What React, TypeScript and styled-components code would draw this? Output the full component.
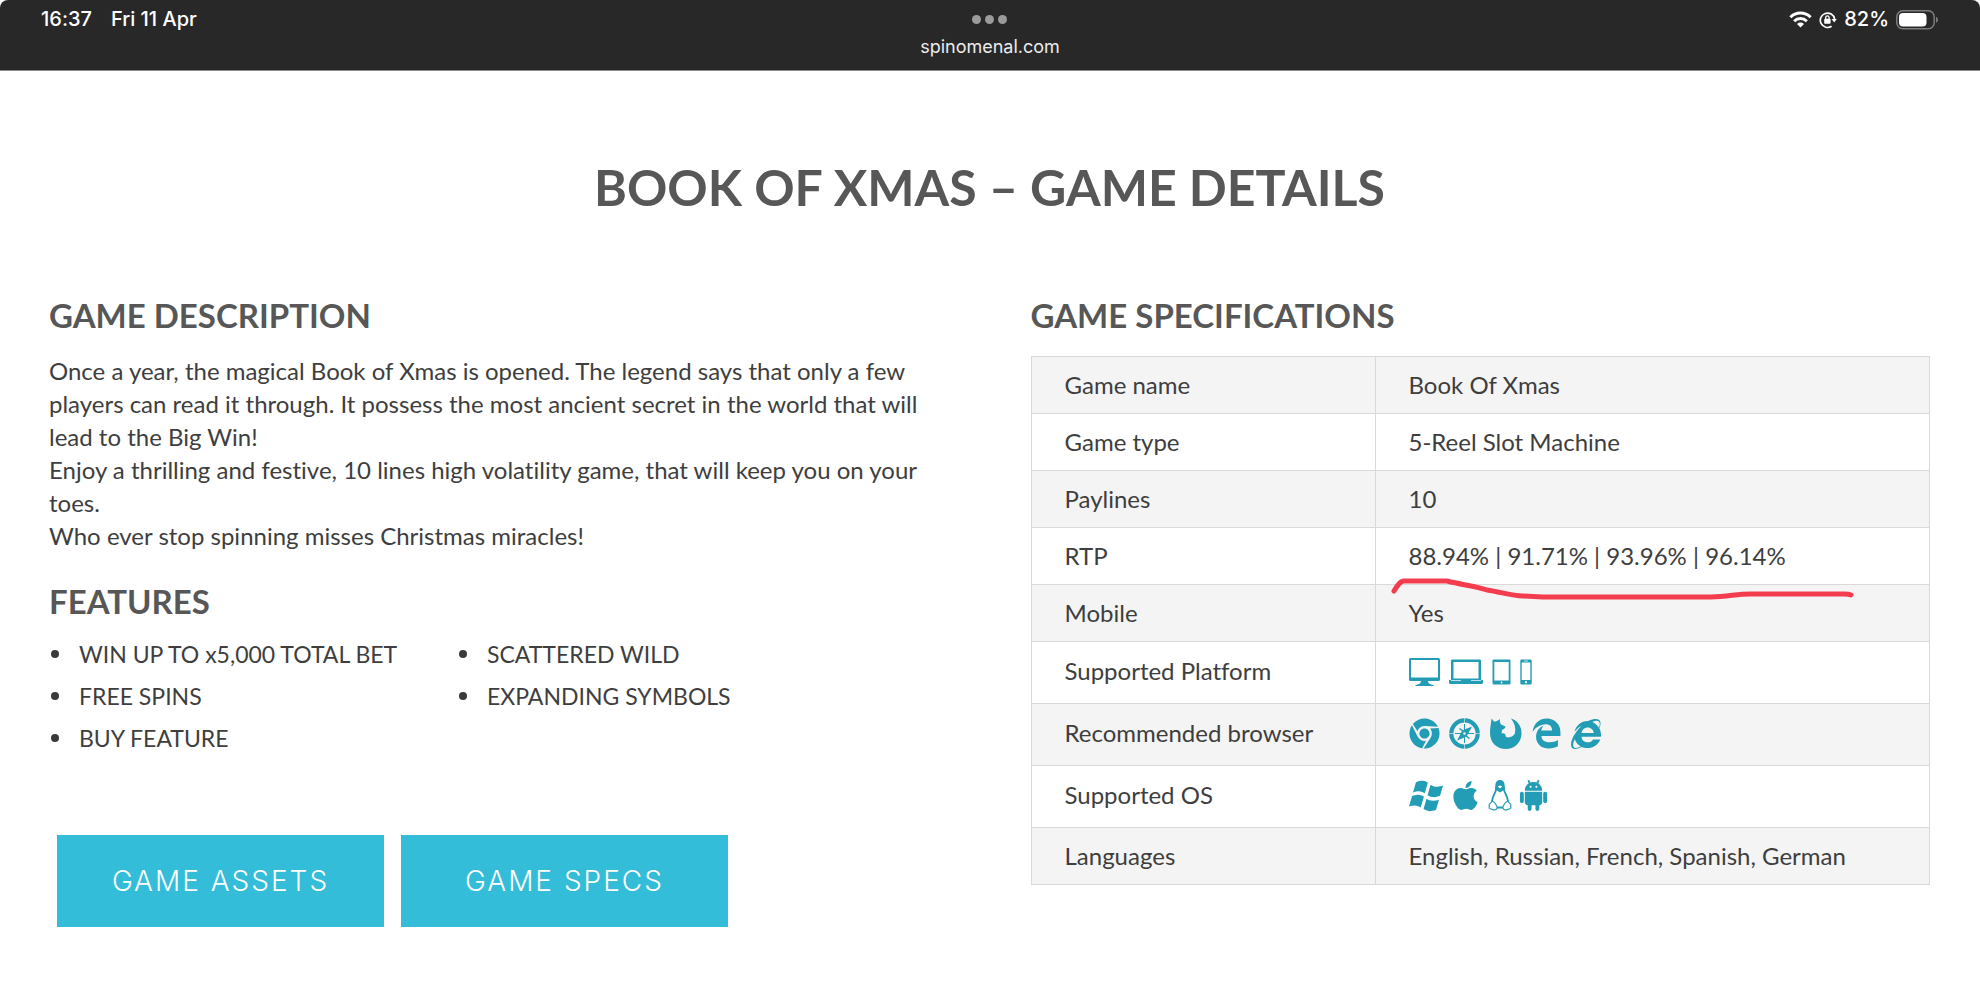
import React from "react";
import styled, { createGlobalStyle } from "styled-components";
import { FaApple, FaChrome, FaEdgeLegacy, FaInternetExplorer } from "react-icons/fa";
import { ImAndroid, ImWindows } from "react-icons/im";

const TEAL = "#239db5";

const GlobalStyle = createGlobalStyle`
  *, *::before, *::after { box-sizing: border-box; }
  body {
    margin: 0;
    background: #fff;
    color: #3e3e3e;
    font-family: Lato, "Open Sans", sans-serif;
    font-size: 24px;
    font-variant-ligatures: none;
    line-height: 33px;
  }
`;

/* Status bar */

const StatusBar = styled.header`
  display: grid;
  grid-template-columns: 1fr auto 1fr;
  align-items: start;
  height: 71px;
  padding: 6px 41px 0;
  background: #282828;
  border-bottom: 1px solid #8a8a8a;
  border-radius: 8px 8px 0 0;
  color: #fff;
  font-family: Inter, sans-serif;
  font-size: 20px;
  font-weight: 500;
  line-height: 27px;
`;

const StatusGroup = styled.div<{ $end?: boolean; $gap: number }>`
  display: flex;
  align-items: center;
  justify-content: ${(p) => (p.$end ? "flex-end" : "flex-start")};
  gap: ${(p) => p.$gap}px;
`;

const TabInfo = styled.div`
  display: flex;
  flex-direction: column;
  align-items: center;
`;

const Dots = styled.div`
  display: flex;
  align-items: center;
  gap: 4px;
  height: 27px;
`;

const Dot = styled.i`
  width: 9px;
  height: 9px;
  border-radius: 50%;
  background: #9b9b9b;
`;

const Address = styled.span`
  color: #ececec;
  font-size: 18px;
  font-weight: 400;
`;

/* Page */

const Page = styled.main`
  padding: 86px 50px 58px 49px;
`;

const Title = styled.h1`
  margin: 0 0 78px;
  color: #575757;
  font-size: 50px;
  font-weight: 700;
  line-height: 60px;
  text-align: center;
`;

const Columns = styled.div`
  display: grid;
  grid-template-columns: 1fr 1fr;
  gap: 82px;
  align-items: start;
`;

const Heading = styled.h2`
  margin: 0;
  color: #575757;
  font-size: 33px;
  font-weight: 700;
  line-height: 40px;
`;

const Description = styled.div`
  margin: 19px 0 29px;
  padding-right: 20px;

  p {
    margin: 0;
  }
`;

const FeatureLists = styled.div`
  display: flex;
  gap: 52px;
  margin-top: 12px;
  font-size: 23px;
`;

const FeatureList = styled.ul`
  min-width: 356px;
  margin: 0;
  padding: 0;
  list-style: none;
`;

const Feature = styled.li`
  display: flex;
  align-items: center;
  gap: 20px;
  height: 42px;
  white-space: nowrap;

  &::before {
    content: "";
    width: 8px;
    height: 8px;
    margin-left: 2px;
    border-radius: 50%;
    background: #3a3a3a;
  }
`;

const Actions = styled.div`
  display: flex;
  gap: 17px;
  margin: 76px 0 0 8px;
`;

const ActionLink = styled.a`
  display: flex;
  align-items: center;
  justify-content: center;
  width: 327px;
  height: 92px;
  background: #33bdd8;
  color: #fff;
  font-family: Inter, sans-serif;
  font-size: 28px;
  font-weight: 300;
  letter-spacing: 2px;
  text-decoration: none;
`;

/* Specification table */

const SpecTable = styled.table`
  width: 100%;
  margin-top: 21px;
  border-collapse: collapse;
  table-layout: fixed;
`;

const SpecRow = styled.tr<{ $tall?: boolean }>`
  height: ${(p) => (p.$tall ? 62 : 57)}px;

  &:nth-child(odd) {
    background: #f4f4f4;
  }

  th {
    padding-bottom: ${(p) => (p.$tall ? 5 : 2)}px;
  }
`;

const Label = styled.th`
  width: 344px;
  padding: 0 33px;
  border: 1px solid #d9d9d9;
  font-weight: 400;
  text-align: left;
`;

const Value = styled.td`
  position: relative;
  padding: 0 33px 2px;
  border: 1px solid #d9d9d9;
`;

const Marker = styled.svg`
  position: absolute;
  top: 49px;
  left: 13px;
  z-index: 1;
  overflow: visible;
`;

const Icons = styled.div<{ $gap: number }>`
  display: flex;
  align-items: center;
  gap: ${(p) => p.$gap}px;
  color: ${TEAL};
  fill: currentColor;

  svg {
    flex: none;
    display: block;
  }
`;

const Wifi = () => (
  <svg width="23" height="17" viewBox="0 0 23 17" fill="none" stroke="#fff" strokeWidth="3" aria-label="Wi-Fi">
    <path d="M1.4 6.2a14.3 14.3 0 0 1 20.2 0M5.2 10.2a8.9 8.9 0 0 1 12.6 0" />
    <path d="M11.5 16.5 8 13a5 5 0 0 1 7 0Z" fill="#fff" stroke="none" />
  </svg>
);

const RotationLock = () => (
  <svg width="18" height="18" viewBox="0 0 18 18" fill="none" stroke="#fff" strokeWidth="1.7" aria-label="Rotation lock">
    <path d="M12.6 15.2A7.2 7.2 0 1 1 15.6 8" />
    <path d="M12.6 8h5.2l-2.6 3.6Z" fill="#fff" stroke="none" />
    <rect x="5.2" y="7.8" width="6.4" height="5" rx=".8" fill="#fff" stroke="none" />
    <path d="M6.7 8V6.6a1.7 1.7 0 0 1 3.4 0V8" strokeWidth="1.3" />
  </svg>
);

const Battery = () => (
  <svg width="43" height="20" viewBox="0 0 43 20" aria-label="Battery">
    <rect x=".8" y=".8" width="37.4" height="18" rx="6" fill="none" stroke="#7d7d7d" strokeWidth="1.5" />
    <rect x="3" y="3" width="27.5" height="13.6" rx="4" fill="#fff" />
    <path d="M40 6.8c2.6.8 2.6 5.2 0 6Z" fill="#7d7d7d" />
  </svg>
);

const Monitor = () => (
  <svg width="31" height="28" viewBox="0 0 31 28">
    <path fillRule="evenodd" d="M1.500 0h28A1.500 1.500 0 0 1 31 1.500v20a1.500 1.500 0 0 1-1.500 1.500H19c.3 2 1 3.300 5.500 3.900V28h-18v-1.100C11 26.300 11.700 25 12 23H1.500A1.500 1.500 0 0 1 0 21.500v-20A1.500 1.500 0 0 1 1.500 0ZM2 2v17.500h27V2Z" />
  </svg>
);

const Laptop = () => (
  <svg width="34" height="26" viewBox="0 0 34 26">
    <path fillRule="evenodd" d="M3 .5h28a1 1 0 0 1 1 1V21h2v2.500a1.500 1.500 0 0 1-1.500 1.500h-31A1.500 1.500 0 0 1 0 23.500V21h2V1.500a1 1 0 0 1 1-1ZM4.500 3v16.500h25V3Z" />
    <path d="M2 21.500h10M22 21.500h10" stroke="#fff" strokeWidth=".7" />
  </svg>
);

const Tablet = () => (
  <svg width="19" height="26" viewBox="0 0 19 26">
    <path fillRule="evenodd" d="M1.500 .5h16a1 1 0 0 1 1 1v23a1 1 0 0 1-1 1h-16a1 1 0 0 1-1-1v-23a1 1 0 0 1 1-1ZM2.300 3v18.500h14.400V3Z" />
    <circle cx="9.500" cy="23.500" r=".9" fill="#fff" />
  </svg>
);

const Phone = () => (
  <svg width="12" height="26" viewBox="0 0 12 26">
    <path fillRule="evenodd" d="M1.500 .5h9a1.200 1.200 0 0 1 1.200 1.200v22.600a1.200 1.200 0 0 1-1.200 1.200h-9A1.200 1.200 0 0 1 .3 24.300V1.700A1.200 1.200 0 0 1 1.500 .5ZM1.700 3.500V21h8.600V3.500Z" />
    <path d="M4 2h4" stroke="#fff" strokeWidth=".7" />
    <circle cx="6" cy="23.200" r="1.100" fill="#fff" />
  </svg>
);

const Compass = () => (
  <svg width="31" height="31" viewBox="0 0 31 31">
    <circle cx="15.500" cy="15.500" r="13.200" fill="none" stroke="currentColor" strokeWidth="4.200" />
    <path d="M15.500 0v5M15.500 26v5M0 15.500h5M26 15.500h5" stroke="#f4f4f4" strokeWidth=".6" />
    <path d="M15.500 6v19M6 15.500h19" stroke="currentColor" strokeWidth="1" />
    <path d="M23 8.500 18.200 17.500 15.500 19.500 8 22.500 12.800 13.500 15.500 11.500Z" />
    <path d="M10.500 10.500l4 3M20.500 20.500l-4-3" stroke="currentColor" strokeWidth="1.500" />
    <circle cx="15.500" cy="15.500" r="1.200" fill="#f4f4f4" />
  </svg>
);

const Firefox = () => (
  <svg width="33" height="31" viewBox="0 0 33 31">
    <path d="M2.500.5 5 3.500c2 0 3.500-.5 6-2.500-.3 2 0 4 1 5.500l4.500 2c0 1.500-1.500 2.500-3.500 3.500l-.5 3.500c2.500-.5 4.500.5 4 2.500 1 3 8.500 1 9.500-3 1-5-.5-10-4-14.500 7 2 11 9 10.500 15.500C32 25 25 31 17 31 8 31 1 25 1 15 1 9 2 6 2.500.5Z" />
  </svg>
);

const Tux = () => (
  <svg width="24" height="31" viewBox="0 0 24 31">
    <path d="M12 0c3.300 0 4.700 2.600 4.700 6L17 10.500 7 10.500 7.300 6C7.300 2.600 8.700 0 12 0Z" />
    <path d="M8.300 9C8 12 4.600 15.500 4 21c-.1 2 1.500 4 4 6.500h8c2.500-2.500 4.100-4.500 4-6.500-.6-5.500-4-9-4.300-12L12 11.500Z" fill="#fff" stroke="currentColor" strokeWidth="1.800" />
    <path d="M4.500 21.500c1.500 0 3.500 3 4.500 5 .8 2.600-1.500 3.600-3.500 3.300L1.500 28.500c-1-.5-.2-1.500-.2-2.500 0-1.200-.6-2 .4-2.300 1.500-.3 1.500-2.200 2.800-2.200ZM19.500 21.500c-1.500 0-3.500 3-4.500 5-.8 2.600 1.500 3.600 3.500 3.300l4-1.300c1-.5.2-1.500.2-2.500 0-1.200.6-2-.4-2.300-1.500-.3-1.500-2.200-2.800-2.200Z" fill="#fff" stroke="currentColor" strokeWidth="1.200" />
    <path d="M9.700 6.500 12 5.500l2.300 1L12 8.500Z" fill="#fff" />
  </svg>
);

const features = [
  ["WIN UP TO x5,000 TOTAL BET", "FREE SPINS", "BUY FEATURE"],
  ["SCATTERED WILD", "EXPANDING SYMBOLS"],
];

type Spec = { label: string; value: React.ReactNode; tall?: boolean };

const specs: Spec[] = [
  { label: "Game name", value: "Book Of Xmas" },
  { label: "Game type", value: "5-Reel Slot Machine" },
  { label: "Paylines", value: "10" },
  {
    label: "RTP",
    value: (
      <>
        88.94% | 91.71% | 93.96% | 96.14%
        <Marker width="466" height="24" viewBox="0 0 466 24" aria-hidden="true">
          <path
            d="M5 14C8 9 11 4 15 4H58C74 8 86 9 98 13 112 15 122 19 134 19L154 20H322C340 20 350 16 366 17H455Q460 17 462 18"
            fill="none"
            stroke="#f33d4e"
            strokeWidth="5"
            strokeLinecap="round"
            strokeLinejoin="round"
          />
        </Marker>
      </>
    ),
  },
  { label: "Mobile", value: "Yes" },
  {
    label: "Supported Platform",
    tall: true,
    value: <Icons $gap={9}><Monitor /><Laptop /><Tablet /><Phone /></Icons>,
  },
  {
    label: "Recommended browser",
    tall: true,
    value: (
      <Icons $gap={9}>
        <FaChrome size={31} /><Compass /><Firefox /><FaEdgeLegacy size={31} /><FaInternetExplorer size={30} />
      </Icons>
    ),
  },
  {
    label: "Supported OS",
    tall: true,
    value: (
      <Icons $gap={6}>
        <ImWindows size={34} /><FaApple size={33} /><Tux /><ImAndroid size={31} />
      </Icons>
    ),
  },
  { label: "Languages", value: "English, Russian, French, Spanish, German" },
];

export default function App() {
  return (
    <>
      <GlobalStyle />
      <StatusBar>
        <StatusGroup $gap={19}>
          <span>16:37</span>
          <span>Fri 11 Apr</span>
        </StatusGroup>
        <TabInfo>
          <Dots><Dot /><Dot /><Dot /></Dots>
          <Address>spinomenal.com</Address>
        </TabInfo>
        <StatusGroup $end $gap={7}>
          <Wifi />
          <RotationLock />
          <span>82%</span>
          <Battery />
        </StatusGroup>
      </StatusBar>
      <Page>
        <Title>BOOK OF XMAS – GAME DETAILS</Title>
        <Columns>
          <section>
            <Heading>GAME DESCRIPTION</Heading>
            <Description>
              <p>
                Once a year, the magical Book of Xmas is opened. The legend says that only a few
                players can read it through. It possess the most ancient secret in the world that
                will lead to the Big Win!
              </p>
              <p>
                Enjoy a thrilling and festive, 10 lines high volatility game, that will keep you on
                your toes.
              </p>
              <p>Who ever stop spinning misses Christmas miracles!</p>
            </Description>
            <Heading>FEATURES</Heading>
            <FeatureLists>
              {features.map((list) => (
                <FeatureList key={list[0]}>
                  {list.map((item) => <Feature key={item}>{item}</Feature>)}
                </FeatureList>
              ))}
            </FeatureLists>
            <Actions>
              <ActionLink href="#assets">GAME ASSETS</ActionLink>
              <ActionLink href="#specs">GAME SPECS</ActionLink>
            </Actions>
          </section>
          <section>
            <Heading>GAME SPECIFICATIONS</Heading>
            <SpecTable>
              <tbody>
                {specs.map(({ label, value, tall }) => (
                  <SpecRow key={label} $tall={tall}>
                    <Label scope="row">{label}</Label>
                    <Value>{value}</Value>
                  </SpecRow>
                ))}
              </tbody>
            </SpecTable>
          </section>
        </Columns>
      </Page>
    </>
  );
}
